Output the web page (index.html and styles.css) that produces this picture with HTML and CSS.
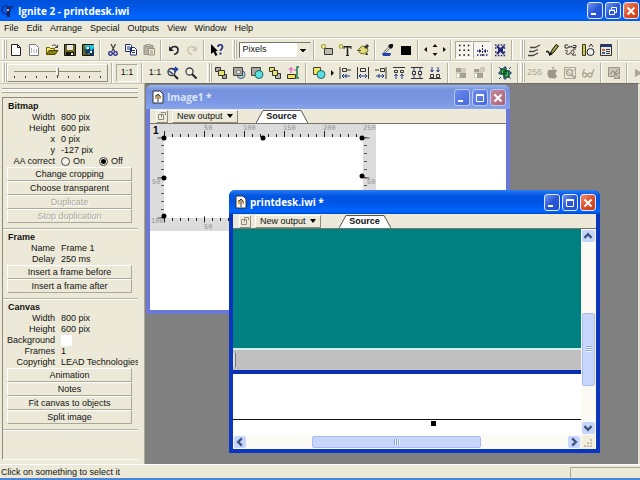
FILE: index.html
```html
<!DOCTYPE html>
<html lang="en">
<head>
<meta charset="utf-8">
<title>Ignite 2 - printdesk.iwi</title>
<link rel="stylesheet" href="styles.css">
</head>
<body>
<header class="titlebar titlebar-main">
  <svg class="app-icon" viewBox="0 0 14 14"><circle cx="5" cy="6" r="4" fill="none" stroke="#1238a8" stroke-width="2"/><path d="M6 3h3v10H6z" fill="#15225e"/><path d="M6 5h2v2H6z" fill="#d8b070"/><path d="M8 3l4-1-1 3" fill="none" stroke="#15225e"/></svg>
  <h1 class="title">Ignite 2 - printdesk.iwi</h1>
  <div class="win-buttons">
    <button class="win-btn" aria-label="Minimize"><svg viewBox="0 0 14 14"><path d="M3 9h5v2H3z" fill="#fff"/></svg></button>
    <button class="win-btn" aria-label="Restore"><svg viewBox="0 0 14 14" fill="none" stroke="#fff"><path d="M5.500 5V3.500h5v5H9M3.500 6h5v4.500h-5zM3 6.500h6"/></svg></button>
    <button class="win-btn close" aria-label="Close"><svg viewBox="0 0 14 14"><path d="M3.500 3.500l7 7M10.500 3.500l-7 7" stroke="#fff" stroke-width="2"/></svg></button>
  </div>
</header>
<nav class="menubar">
  <button>File</button><button>Edit</button><button>Arrange</button><button>Special</button><button>Outputs</button><button>View</button><button>Window</button><button>Help</button>
</nav>

<div class="toolrow toolrow-a">
  <div class="band">
    <i class="grip"></i>
    <button class="tool" aria-label="New"><svg viewBox="0 0 14 14"><path d="M2.500 1.500h6l3 3v8h-9z" fill="#fff" stroke="#222"/><path d="M8.500 1.500v3h3" fill="none" stroke="#222"/></svg></button>
    <button class="tool" aria-label="New from template"><svg viewBox="0 0 14 14"><path d="M2.500 1.500h6l3 3v8h-9z" fill="#fff" stroke="#777"/><path d="M4.500 5v5M7 6v4M9.500 6v4" stroke="#a8b6c0"/></svg></button>
    <button class="tool" aria-label="Open"><svg viewBox="0 0 14 14"><path d="M1.500 11.500v-7h3l1 1h4v2" fill="#f4e46a" stroke="#6b6200"/><path d="M1.500 11.500l2.500-4h9l-3 4z" fill="#8a8210" stroke="#4d4700"/><path d="M7 3c2-2 4-1 5 1M12.500 2v2.500H10" fill="none" stroke="#333"/></svg></button>
    <button class="tool" aria-label="Save"><svg viewBox="0 0 14 14"><path d="M1.500 1.500h11v11h-11z" fill="#6e6a14" stroke="#111"/><path d="M4 2h6v5H4z" fill="#e8e8e0"/><path d="M3 9h8v4H3z" fill="#111"/><path d="M8 10h2v2H8z" fill="#eee"/></svg></button>
    <button class="tool" aria-label="Save image"><svg viewBox="0 0 14 14"><path d="M1.500 1.500h11v11h-11z" fill="#6e6a14" stroke="#111"/><path d="M4 2h9v9H5z" fill="#20c8d8"/><path d="M3 5l3 2 2-4 2 5 3-3v7l-3 1-2-3-3 2z" fill="#153a60"/><path d="M6 4h2v2H6zM9 8h2v2H9z" fill="#fff"/></svg></button>
    <i class="sep"></i>
    <button class="tool" aria-label="Cut"><svg viewBox="0 0 14 14" fill="none"><path d="M5 1l3.500 7M9.500 1L6 8" stroke="#444" stroke-width="1.300"/><circle cx="4.500" cy="10.500" r="1.800" stroke="#1a1a90" stroke-width="1.300"/><circle cx="9.500" cy="10.500" r="1.800" stroke="#1a1a90" stroke-width="1.300"/></svg></button>
    <button class="tool" aria-label="Copy"><svg viewBox="0 0 14 14" fill="#fff" stroke="#1c2a70"><path d="M1.500 1.500h5l1 1v6h-6zM6.500 4.500h4l2 2v5.500h-6z"/><path d="M3 4h3M3 6h3M8 7.500h3M8 9.500h3"/></svg></button>
    <button class="tool" aria-label="Paste" disabled><svg viewBox="0 0 14 14" fill="#b4b1a4" stroke="#96937f"><path d="M2 2.500h9v9H2z"/><path d="M4.500 1.500h4v2h-4z" fill="#ddd"/><path d="M6.500 5.500h6v6.500h-6z" fill="#e6e3d6"/><path d="M8 8h3M8 10h3"/></svg></button>
    <i class="sep"></i>
    <button class="tool" aria-label="Undo"><svg viewBox="0 0 14 14" fill="none"><path d="M4 5.500C6 2.500 11 3 11 7c0 3-2 4-4 4.500" stroke="#24242c" stroke-width="1.600"/><path d="M2 3v5h5z" fill="#24242c"/></svg></button>
    <button class="tool" aria-label="Redo" disabled><svg viewBox="0 0 14 14" fill="none"><path d="M10 5.500C8 2.500 3 3 3 7c0 3 2 4 4 4.500" stroke="#c5c2b4" stroke-width="1.500"/><path d="M12 3v5H7z" fill="#c5c2b4"/></svg></button>
    <i class="sep"></i>
    <button class="tool" aria-label="Context help"><svg viewBox="0 0 14 14"><path d="M1 1v10l2.500-2 2 4 2-1-2-4H8z" fill="#000"/><path d="M8 4c0-3 4.500-3 4.500 0 0 2-2 2-2 4" fill="none" stroke="#1d2c7c" stroke-width="1.700"/><path d="M9.500 9.500h2v2h-2z" fill="#1d2c7c"/></svg></button>
  </div>
  <div class="band">
    <i class="grip"></i>
    <select class="units" aria-label="Units"><option>Pixels</option></select>
    <i class="sep"></i>
    <button class="tool" aria-label="Add shape"><svg viewBox="0 0 14 14"><path d="M4.500 5.500h8v6h-8z" fill="#bcbcb0" stroke="#333"/><circle cx="3.500" cy="3.500" r="2" fill="#fffcb0" stroke="#8b8610"/></svg></button>
    <button class="tool" aria-label="Add text"><svg viewBox="0 0 14 14"><circle cx="3" cy="3.500" r="1.800" fill="#fffcb0" stroke="#8b8610"/><path d="M5.500 3h8v3h-1V4.500h-2.200V12H11v1H8v-1h.7V4.500H6.500V6h-1z" fill="#222"/></svg></button>
    <button class="tool" aria-label="Add drawing"><svg viewBox="0 0 14 14"><path d="M2 7l4-4 5 1 1 4-4 3-4-1z" fill="#e4dc78" stroke="#77701b"/><path d="M8 4l3-3 2 2-3 3M9 12h3l-1-3" fill="#333"/><path d="M1 7.500h4" stroke="#555"/></svg></button>
    <i class="sep"></i>
    <button class="tool" aria-label="Pick colour"><svg viewBox="0 0 14 14"><path d="M3 10l6-6" stroke="#888" stroke-width="2.500"/><path d="M9 1l3 0v3l-2 2-3-3z" fill="#111"/><path d="M1 10h9l-1 3H2z" fill="#1c48b0"/><path d="M4 9l4-4" stroke="#eee"/></svg></button>
    <button class="tool" aria-label="Colour"><svg viewBox="0 0 14 14"><path d="M2 3h10v9H2z" fill="#000"/></svg></button>
    <i class="sep"></i>
    <button class="tool tool-wide" aria-label="Nudge"><svg viewBox="0 0 24 14"><path d="M4 4v5L1 6.500zM20 4v5l3-2.500zM9.500 4h5L12 1zM9.500 10h5L12 13z" fill="#111"/></svg></button>
    <i class="sep"></i>
    <button class="tool pressed" aria-label="Show handles"><svg viewBox="0 0 14 14"><path d="M2 2.500h11M2 12h11M2 7.200h11" stroke="#111" stroke-width="1.500" stroke-dasharray="1.500 2.900"/></svg></button>
    <button class="tool pressed" aria-label="Show rulers"><svg viewBox="0 0 14 14"><path d="M7.500 2v11" stroke="#333" stroke-dasharray="2 1"/><path d="M2 8h4M9 8h4M2 12h11" stroke="#20287a" stroke-width="1.500" stroke-dasharray="1.500 1.500"/><path d="M4 6l2.500 2L4 10M11 6L8.500 8l2.500 2" fill="#20287a"/></svg></button>
    <button class="tool" aria-label="Snap to grid"><svg viewBox="0 0 14 14"><path d="M2 2h11M2 5h11M2 9h11M2 12.500h11" stroke="#20287a" stroke-width="1.500" stroke-dasharray="1.500 1.400"/><path d="M4 3l7 8M11 3l-7 8M5 7h5" stroke="#20287a" stroke-width="2"/></svg></button>
    <i class="sep"></i>
  </div>
  <div class="band">
    <i class="grip"></i>
    <button class="tool" aria-label="Lines"><svg viewBox="0 0 14 14" fill="none" stroke="#444"><path d="M3 4.500h5l5-2.500M2 8.500h4l5-2M1 12.500h5l5-2.500" stroke-width="1.300"/></svg></button>
    <button class="tool" aria-label="Brush"><svg viewBox="0 0 14 14"><path d="M1 8.500h2L5 12" fill="none" stroke="#111" stroke-width="1.500"/><path d="M4.500 12L7 7l4-5.500 2.500 1.500L9 9z" fill="#a8a436" stroke="#111"/><path d="M4 13l1-4 3 2z" fill="#111"/></svg></button>
    <button class="tool" aria-label="Effects"><svg viewBox="0 0 14 14" fill="none" stroke="#333"><path d="M5 2H2v3h3V4M6 5V3l1.500 1L9 3v2M10 2.500h3v2h-3M2 8c3-2 3 1 1 2 0 2 4 2 5-1s3-2 3 0-2 3-3 1M10 6h3M9 12h4"/></svg></button>
    <button class="tool" aria-label="Timing"><svg viewBox="0 0 14 14"><path d="M1.500 1.500h3v11h-3z" fill="#d6cf38" stroke="#333"/><circle cx="9.500" cy="9" r="3.500" fill="#eee" stroke="#222"/><path d="M8 4l2-3 2 3" fill="none" stroke="#333"/></svg></button>
    <button class="tool" aria-label="Properties"><svg viewBox="0 0 14 14"><path d="M1.500 1.500h11v11h-11z" fill="#ece9d8" stroke="#333"/><path d="M2 2h10v2H2z" fill="#1c3c98"/><path d="M3 6h3v2H3z" fill="#d65a2b"/><path d="M3 9h3v2H3z" fill="#2f60b0"/><path d="M7 6.500h4M7 8.500h4M7 10.500h4" stroke="#335"/></svg></button>
    <i class="sep"></i>
  </div>
</div>

<div class="toolrow toolrow-b">
  <div class="band">
    <i class="grip"></i>
    <div class="zoom-slider">
      <input type="range" min="0" max="16" value="8" aria-label="Zoom">
      <div class="ticks"><i></i><i></i><i></i><i></i><i></i><i></i><i></i><i></i><i></i></div>
    </div>
    <i class="sep"></i>
    <button class="tool tool-ratio pressed">1:1</button>
    <i class="sep"></i>
    <button class="tool">1:1</button>
    <button class="tool" aria-label="Zoom to fit"><svg viewBox="0 0 14 14" fill="none"><circle cx="5.500" cy="6" r="3.500" stroke="#333" stroke-width="1.300"/><path d="M8 9l4 4" stroke="#222" stroke-width="2"/><path d="M6 3l5 0-2 3M3 5l4 3M9 1l3 3" stroke="#1c3ca8" stroke-width="1.500"/></svg></button>
    <button class="tool" aria-label="Zoom"><svg viewBox="0 0 14 14" fill="none"><circle cx="5.500" cy="5.500" r="3.500" fill="#f4f2e6" stroke="#444" stroke-width="1.300"/><path d="M8 8l4.500 4.500" stroke="#222" stroke-width="2"/></svg></button>
  </div>
  <div class="band">
    <i class="grip"></i>
    <button class="tool" aria-label="Group"><svg viewBox="0 0 14 14" stroke="#333"><path d="M1.500 1.500h5v4h-5z" fill="#aaa"/><path d="M8.500 8.500h4v4h-4z" fill="#aaa"/><path d="M4.500 4.500h6v5h-6z" fill="#e8e468"/></svg></button>
    <button class="tool" aria-label="Send to back"><svg viewBox="0 0 14 14"><circle cx="9" cy="8.500" r="4" fill="#a9dcd8" stroke="#458"/><path d="M1.500 1.500h9v8h-9z" fill="#aaa89c" stroke="#444"/><path d="M4.500 4.500h4v3h-4z" fill="#e4e2d8" stroke="#888"/></svg></button>
    <button class="tool" aria-label="Bring to front"><svg viewBox="0 0 14 14"><path d="M1.500 1.500h9v8h-9z" fill="#aaa89c" stroke="#444"/><circle cx="9" cy="8.500" r="4" fill="#58dfe0" stroke="#266"/></svg></button>
    <button class="tool" aria-label="Bring forward"><svg viewBox="0 0 14 14" stroke="#333"><path d="M1.500 1.500h5v4h-5z" fill="#e8e468"/><path d="M7.500 7.500h5v5h-5z" fill="#bbb"/><path d="M4.500 4.500h5v5h-5z" fill="#e8e468"/></svg></button>
    <button class="tool" aria-label="Arrange order"><svg viewBox="0 0 14 14"><path d="M1.500 8.500h8v4h-8z" fill="#f2e458" stroke="#333"/><path d="M5 7V2M3 4l2-2.500L7 4M8 4h3" fill="none" stroke="#e045b0"/><path d="M13 1h-2v11h2" fill="none" stroke="#108050" stroke-width="1.500"/></svg></button>
    <i class="sep"></i>
    <button class="tool" aria-label="Align objects"><svg viewBox="0 0 14 14"><path d="M1.500 1.500h7v7h-7z" fill="#f2e458" stroke="#444"/><circle cx="9" cy="8.500" r="4" fill="#58dfe0" stroke="#266"/></svg></button>
    <button class="tool tool-thin" aria-label="Align menu"><svg viewBox="0 0 8 14"><path d="M3 4v6l3-3z" fill="#111"/></svg></button>
    <button class="tool" aria-label="Align left"><svg viewBox="0 0 14 14" fill="none" stroke="#333"><path d="M2 1v12M4.500 2.500h4v3h-4zM9 4h4"/><path d="M4 10h8M6 8l-2 2 2 2M8 8v4" stroke="#24388a"/></svg></button>
    <button class="tool" aria-label="Align centre"><svg viewBox="0 0 14 14" fill="none" stroke="#333"><path d="M1.500 1v12M12.500 1v12M4.500 2.500h5v3h-5z"/><path d="M3 10h8M5 8L3 10l2 2M9 8l2 2-2 2" stroke="#24388a"/></svg></button>
    <button class="tool" aria-label="Align right"><svg viewBox="0 0 14 14" fill="none" stroke="#333"><path d="M12 1v12M6.500 2.500h4v3h-4zM1 4h4"/><path d="M2 10h8M8 8l2 2-2 2M5 8v4" stroke="#24388a"/></svg></button>
    <button class="tool" aria-label="Align top"><svg viewBox="0 0 14 14" fill="none" stroke="#333"><path d="M1 1.500h12M2.500 4.500h3v2h-3zM8.500 4.500h3v2h-3z"/><path d="M4 13V8M2.500 10L4 8l1.500 2M10 13V8M8.500 10L10 8l1.500 2" stroke="#24388a"/></svg></button>
    <button class="tool" aria-label="Align middle"><svg viewBox="0 0 14 14" fill="none" stroke="#333"><path d="M1 1.500h12M1 12.500h12M2.500 5.500h3v3h-3zM8.500 5.500h3v3h-3z"/><path d="M4 2v3M10 2v3M4 9v3M10 9v3" stroke="#24388a"/></svg></button>
    <button class="tool" aria-label="Align bottom"><svg viewBox="0 0 14 14" fill="none" stroke="#333"><path d="M1 12.500h12M2.500 8.500h3v3h-3zM8.500 8.500h3v3h-3z"/><path d="M4 1v5M2.500 4L4 6l1.500-2M10 1v5M8.500 4L10 6l1.500-2" stroke="#24388a"/></svg></button>
    <i class="sep"></i>
    <button class="tool" aria-label="Group frames" disabled><svg viewBox="0 0 14 14"><path d="M2 2h10v10H2z" fill="#cfccbd"/><path d="M2 2h5v4H2zM6 7h6v5H6z" fill="#a5a294"/><path d="M3 8h2v3H3z" fill="#fff"/></svg></button>
    <button class="tool" aria-label="Ungroup frames" disabled><svg viewBox="0 0 14 14"><path d="M2 3h9v9H2z" fill="#cfccbd"/><path d="M2 3h5v3H2zM5 7h6v5H5z" fill="#a5a294"/><path d="M8 2h5M12 2v4" stroke="#aaa"/><path d="M3 8h2v3H3z" fill="#fff"/></svg></button>
    <i class="sep"></i>
    <button class="tool" aria-label="Fit canvas"><svg viewBox="0 0 14 14"><path d="M3 3h5v5H3zM6 5h5v6H6z" fill="#46c85c" stroke="#0b4a2a" stroke-width="1.500"/><path d="M5 2l2-2 2 2zM5 12l2 2 2-2zM2 5L0 7l2 2zM12 5l2 2-2 2z" fill="#2553a8"/><path d="M1 1l2 2M13 1l-2 2M1 13l2-2M13 13l-2-2" stroke="#2553a8"/></svg></button>
    <i class="sep"></i>
  </div>
  <div class="band">
    <i class="grip"></i>
    <button class="tool" disabled>256</button>
    <button class="tool" aria-label="Mac colours" disabled><svg viewBox="0 0 14 14" fill="#9a978a"><path d="M7 4c3-1 5 0 5 1-2 1-2 4 0 5-1 3-3 3-5 2-2 1-4 0-4.500-4S4 3 7 4zM7 3c0-2 1-2 2.500-2.500C9 2 8.500 3 7 3z"/></svg></button>
    <button class="tool" aria-label="Inspect" disabled><svg viewBox="0 0 14 14" fill="none" stroke="#aaa799"><path d="M1.500 1.500h11v11h-11zM2 3l10 9M12 3l-3 3"/><circle cx="6.500" cy="6.500" r="3" stroke-width="1.500"/><path d="M9 9l3 3" stroke-width="2"/></svg></button>
    <button class="tool" aria-label="Preview" disabled><svg viewBox="0 0 14 14" fill="none" stroke="#aaa799" stroke-width="1.300"><circle cx="3.500" cy="9" r="2"/><circle cx="9" cy="9" r="2"/><path d="M5.500 8.500h1.500M1.500 8l2-5M11 8l2-5"/></svg></button>
    <i class="sep"></i>
    <button class="tool" aria-label="Export" disabled><svg viewBox="0 0 14 14"><path d="M1.500 1.500h11v9h-11z" fill="#c9c6b8" stroke="#98958a"/><path d="M3 8l3-3 2 2 3-4" fill="none" stroke="#8c897c"/><path d="M7 7h6v6H7z" fill="#a19e91"/><path d="M8 10l1.500 1.500L12 8" fill="none" stroke="#eee"/></svg></button>
    <i class="sep"></i>
    <button class="tool" aria-label="Play" disabled><svg viewBox="0 0 14 14"><path d="M2 3v8l7-4z" fill="#a9a698"/></svg></button>
  </div>
</div>

<main class="main">
  <aside class="side">
    <i class="side-grip"></i>
    <div class="panel">
      <section class="group">
        <h2>Bitmap</h2>
        <dl>
          <dt>Width</dt><dd>800 pix</dd>
          <dt>Height</dt><dd>600 pix</dd>
          <dt>x</dt><dd>0 pix</dd>
          <dt>y</dt><dd>-127 pix</dd>
          <dt>AA correct</dt>
          <dd class="radios"><label><input type="radio" name="aa">On</label><label><input type="radio" name="aa" checked>Off</label></dd>
        </dl>
        <button class="cmd">Change cropping</button>
        <button class="cmd">Choose transparent</button>
        <button class="cmd" disabled>Duplicate</button>
        <button class="cmd" disabled>Stop duplication</button>
      </section>
      <section class="group">
        <h2>Frame</h2>
        <dl>
          <dt>Name</dt><dd>Frame 1</dd>
          <dt>Delay</dt><dd>250 ms</dd>
        </dl>
        <button class="cmd">Insert a frame before</button>
        <button class="cmd">Insert a frame after</button>
      </section>
      <section class="group">
        <h2>Canvas</h2>
        <dl>
          <dt>Width</dt><dd>800 pix</dd>
          <dt>Height</dt><dd>600 pix</dd>
          <dt>Background</dt><dd><button class="swatch" aria-label="Background colour"></button></dd>
          <dt>Frames</dt><dd>1</dd>
          <dt>Copyright</dt><dd>LEAD Technologies</dd>
        </dl>
        <button class="cmd">Animation</button>
        <button class="cmd">Notes</button>
        <button class="cmd">Fit canvas to objects</button>
        <button class="cmd">Split image</button>
      </section>
    </div>
  </aside>

  <div class="workspace">
    <section class="window window-image">
      <header class="titlebar">
        <svg class="doc-icon" viewBox="0 0 12 14"><path d="M1 1h7l3 3v9H1z" fill="#fff" stroke="#333"/><path d="M3 5h2v4H3zM7 6h2v3H7z" fill="#dca64a"/><path d="M6 4v8M3.500 6.500L6 4l2.500 2.500" fill="none" stroke="#333"/></svg>
        <h2 class="title">Image1 *</h2>
        <div class="win-buttons">
          <button class="win-btn" aria-label="Minimize"><svg viewBox="0 0 14 14"><path d="M3 9h5v2H3z" fill="#fff"/></svg></button>
          <button class="win-btn" aria-label="Maximize"><svg viewBox="0 0 14 14" fill="none" stroke="#fff"><path d="M3.500 3.500h7v7h-7zM3 4.500h8"/></svg></button>
          <button class="win-btn close" aria-label="Close"><svg viewBox="0 0 14 14"><path d="M3.500 3.500l7 7M10.500 3.500l-7 7" stroke="#fff" stroke-width="2"/></svg></button>
        </div>
      </header>
      <div class="docbar">
        <button class="doc-btn icon-only" aria-label="Output"><svg viewBox="0 0 10 10" fill="none" stroke="#8f8c7e"><path d="M1.500 3.500h5v5h-5zM4.500 6V2.500M4 1.500h4.500V4"/></svg></button>
        <button class="doc-btn">New output <svg class="caret" viewBox="0 0 6 4"><path d="M0 0h6L3 4z"/></svg></button>
        <button class="tab"><svg class="tab-shape" viewBox="0 0 52 13" preserveAspectRatio="none"><path d="M0 13L7 .5h38L52 13" fill="#fff" stroke="#555"/></svg><span>Source</span></button>
      </div>
      <div class="doc-view">
        <svg class="ruled" viewBox="0 0 226 107" role="img" aria-label="Ruled image area">
          <path d="M0 0h226v107H0z" fill="#dcdcdc"/>
          <path d="M14 13h199v81H14z" fill="#fff"/>
          <g stroke="#222" fill="none">
            <path d="M14 11.500h200M14 95.500h200" stroke-width="3" stroke-dasharray="1 7"/>
            <path d="M14 10h200M14 95.500h200" stroke-width="6" stroke-dasharray="1 39"/>
            <path d="M12.500 13v81M215.500 13v81" stroke="#555" stroke-width="3" stroke-dasharray="1 7"/>
            <path d="M10.500 13.500v82M216.500 13.500v82" stroke="#555" stroke-width="6" stroke-dasharray="1 39"/>
          </g>
          <g class="ruler-text">
            <text x="54" y="6">50</text><text x="93" y="6">100</text><text x="133" y="6">150</text><text x="173" y="6">200</text><text x="213" y="6">250</text>
            <text x="2" y="60">50</text><text x="1" y="99">100</text><text x="54" y="105">50</text><text x="217" y="60">50</text>
          </g>
          <text class="frame-no" x="3" y="10">1</text>
          <g><circle cx="14" cy="14" r="2.500"/><circle cx="14" cy="54" r="2.500"/><circle cx="14" cy="92" r="2.500"/><circle cx="113" cy="14" r="2.500"/><circle cx="212" cy="14" r="2.500"/><circle cx="212" cy="52" r="2.500"/></g>
        </svg>
      </div>
    </section>

    <section class="window window-print active">
      <header class="titlebar">
        <svg class="doc-icon" viewBox="0 0 12 14"><path d="M1 1h7l3 3v9H1z" fill="#fff" stroke="#333"/><path d="M3 5h2v4H3zM7 6h2v3H7z" fill="#dca64a"/><path d="M6 4v8M3.500 6.500L6 4l2.500 2.500" fill="none" stroke="#333"/></svg>
        <h2 class="title">printdesk.iwi *</h2>
        <div class="win-buttons">
          <button class="win-btn" aria-label="Minimize"><svg viewBox="0 0 14 14"><path d="M3 9h5v2H3z" fill="#fff"/></svg></button>
          <button class="win-btn" aria-label="Maximize"><svg viewBox="0 0 14 14" fill="none" stroke="#fff"><path d="M3.500 3.500h7v7h-7zM3 4.500h8"/></svg></button>
          <button class="win-btn close" aria-label="Close"><svg viewBox="0 0 14 14"><path d="M3.500 3.500l7 7M10.500 3.500l-7 7" stroke="#fff" stroke-width="2"/></svg></button>
        </div>
      </header>
      <div class="docbar">
        <button class="doc-btn icon-only" aria-label="Output"><svg viewBox="0 0 10 10" fill="none" stroke="#8f8c7e"><path d="M1.500 3.500h5v5h-5zM4.500 6V2.500M4 1.500h4.500V4"/></svg></button>
        <button class="doc-btn">New output <svg class="caret" viewBox="0 0 6 4"><path d="M0 0h6L3 4z"/></svg></button>
        <button class="tab"><svg class="tab-shape" viewBox="0 0 52 13" preserveAspectRatio="none"><path d="M0 13L7 .5h38L52 13" fill="#fff" stroke="#555"/></svg><span>Source</span></button>
      </div>
      <div class="doc-view doc-scroll">
        <div class="picture">
          <div class="desk"></div>
          <div class="taskbar"><i></i></div>
          <div class="paper"></div>
          <div class="below"><i class="handle"></i></div>
        </div>
        <div class="scroll scroll-v">
          <button aria-label="Scroll up"><svg viewBox="0 0 10 10"><path d="M2 6.500l3-3 3 3"/></svg></button>
          <span class="track track-before"></span>
          <span class="thumb"><i></i></span>
          <span class="track track-after"></span>
          <button aria-label="Scroll down"><svg viewBox="0 0 10 10"><path d="M2 3.500l3 3 3-3"/></svg></button>
        </div>
        <div class="scroll scroll-h">
          <button aria-label="Scroll left"><svg viewBox="0 0 10 10"><path d="M6.500 2l-3 3 3 3"/></svg></button>
          <span class="track track-before"></span>
          <span class="thumb"><i></i></span>
          <span class="track track-after"></span>
          <button aria-label="Scroll right"><svg viewBox="0 0 10 10"><path d="M3.500 2l3 3-3 3"/></svg></button>
        </div>
        <svg class="resize" viewBox="0 0 14 14"><path d="M9 4h2v2H9zM6 7h2v2H6zM9 7h2v2H9zM3 10h2v2H3zM6 10h2v2H6zM9 10h2v2H9z" fill="#cbbfa8"/></svg>
      </div>
    </section>
  </div>
</main>

<footer class="status"><span>Click on something to select it</span><i class="status-cell"></i></footer>
</body>
</html>
```
FILE: styles.css
```css
* { box-sizing: border-box; }

body {
  margin: 0;
  height: 100vh;
  display: flex;
  flex-direction: column;
  overflow: hidden;
  background: #ece9d8;
  color: #111;
  font: 9px/11px "Liberation Sans", Arial, sans-serif;
}

button {
  font: inherit;
  color: inherit;
  padding: 0;
  margin: 0;
  border: 0;
  background: none;
}

h1, h2, dl, dd { margin: 0; }
svg { display: block; }

/* Title bars */
.titlebar {
  display: flex;
  align-items: center;
  flex: none;
  height: 24px;
  padding: 0 4px 0 6px;
  gap: 3px;
  color: #fff;
  background: linear-gradient(#9db4ee, #7691dc 20%, #7b98e4 70%, #86a4ee);
}
.active .titlebar { background: linear-gradient(#2a7cf5, #0054e0 25%, #0055e5 55%, #0066ff 90%, #0048c8); }
.titlebar-main {
  height: 21px;
  padding: 0 1px 0 1px;
  background: linear-gradient(#0050d8, #0056e4 30%, #0066ff 85%, #0058e8);
}
.title {
  flex: 1;
  font: bold 10px/14px "Open Sans", "Noto Sans", sans-serif;
}
.app-icon { width: 14px; height: 14px; }
.doc-icon { width: 12px; height: 14px; }
.win-buttons { display: flex; gap: 2px; }
.win-btn {
  width: 16px;
  height: 17px;
  padding: 1px 0 0;
  border: 1px solid #dfe8fc;
  border-radius: 3px;
  background: linear-gradient(135deg, #6f97f0, #2a57d8 50%, #2450cc);
}
.win-btn.close { background: linear-gradient(135deg, #f09070, #dd4f2a 50%, #c8401c); }
.win-btn svg { width: 14px; height: 14px; }
.window-image .win-btn { border-color: #b9c8f4; background: linear-gradient(135deg, #6d8cec, #4668dc); }
.window-image .win-btn.close { background: linear-gradient(135deg, #c48a9c, #ac6074); }
.window-image .title { color: #dbe5fb; }

.menubar {
  display: flex;
  flex: none;
  gap: 8px;
  height: 16px;
  padding: 0 4px 2px;
}

/* Toolbars */
.toolrow {
  display: grid;
  flex: none;
  height: 23px;
  border-top: 1px solid #c9c6b6;
  overflow: hidden;
}
.toolrow-a { grid-template-columns: 36% 45% 19%; }
.toolrow-b { grid-template-columns: 32% 49% 19%; }
.band {
  display: flex;
  align-items: center;
  min-width: 0;
  border-top: 1px solid #fff;
}
.grip {
  flex: none;
  width: 4px;
  height: 19px;
  margin: 0 1px 0 2px;
  border: solid #fff;
  border-width: 0 1px;
  box-shadow: 1px 0 #b5b2a2, inset -1px 0 #b5b2a2;
}
.sep {
  flex: none;
  width: 2px;
  height: 20px;
  margin: 0 3px 0 2px;
  border-left: 1px solid #b5b2a2;
  border-right: 1px solid #fff;
}
.toolrow-b .sep { margin: 0 3px; }
.tool {
  flex: none;
  display: grid;
  place-items: center;
  width: 18px;
  height: 18px;
}
.tool svg { width: 14px; height: 14px; }
.tool:disabled { color: #aaa799; }
.tool-wide { width: 26px; }
.tool-wide svg { width: 24px; }
.tool-thin { width: 8px; }
.tool-thin svg { width: 8px; }
.tool-ratio { width: 22px; }
.pressed {
  background: #f6f4ec;
  border: 1px solid;
  border-color: #aca899 #fff #fff #aca899;
}
.tool-ratio.pressed { background: #ece9d8; }
.units {
  appearance: none;
  width: 72px;
  height: 16px;
  margin-left: 2px;
  padding: 0 2px;
  border: 1px solid;
  border-color: #77756a #ddd #ddd #77756a;
  border-radius: 0;
  font: inherit;
  color: inherit;
  background:
    linear-gradient(#111, #111) right 4px top 6px / 6px 1px no-repeat,
    linear-gradient(#111, #111) right 5px top 7px / 4px 1px no-repeat,
    linear-gradient(#111, #111) right 6px top 8px / 2px 1px no-repeat,
    linear-gradient(#ece9d8, #ece9d8) right / 13px 100% no-repeat,
    #fff;
}

.zoom-slider {
  flex: none;
  width: 101px;
  height: 18px;
  padding: 2px 6px;
  border: 1px solid;
  border-color: #fff #8f8c7e #8f8c7e #fff;
}
.zoom-slider input {
  appearance: none;
  display: block;
  width: 100%;
  height: 9px;
  margin: 0;
  background: linear-gradient(#8f8c7e, #8f8c7e) center / 100% 1px no-repeat;
}
.zoom-slider input::-webkit-slider-thumb {
  appearance: none;
  width: 3px;
  height: 9px;
  background: #ece9d8;
  border: 1px solid;
  border-color: #fff #77756a #77756a #fff;
}
.ticks { display: flex; justify-content: space-between; }
.ticks i { width: 1px; height: 2px; background: #333; }

/* Main area */
.main { display: flex; flex: 1; min-height: 0; }
.side {
  display: flex;
  flex-direction: column;
  flex: none;
  width: 145px;
  padding: 4px 6px 4px 2px;
  border-top: 1px solid #c9c6b6;
  border-right: 1px solid #aca899;
  gap: 4px;
}
.side-grip {
  height: 5px;
  flex: none;
  border: solid #aca899;
  border-width: 1px 0;
  box-shadow: inset 0 1px #fff, inset 0 -1px #fff;
}
.panel {
  flex: 1;
  min-height: 0;
  overflow: hidden;
  border-top: 1px solid #8f8c7e;
  border-left: 1px solid #8f8c7e;
  border-bottom: 1px solid #fff;
}
.group {
  display: flex;
  flex-direction: column;
  padding: 2px 6px 5px 4px;
  border-bottom: 1px solid #b5b2a2;
  box-shadow: 0 1px #fff;
}
.group h2 { font: bold 9px/12px "Liberation Sans", Arial, sans-serif; padding-left: 1px; }
.group dl {
  display: grid;
  grid-template-columns: 48px 1fr;
  grid-auto-rows: 11px;
  column-gap: 6px;
}
.group dt { text-align: right; }
.group dd { white-space: nowrap; }
.radios { display: flex; gap: 14px; }
.radios label { display: flex; align-items: center; gap: 3px; }
.radios input {
  appearance: none;
  width: 9px;
  height: 9px;
  margin: 0;
  border: 1px solid #444;
  border-radius: 50%;
  background: #f6f4ea;
}
.radios input:checked { background: radial-gradient(#000 2px, #f6f4ea 3px); }
.swatch { display: block; width: 11px; height: 11px; background: #fff; }
.cmd {
  height: 14px;
  border: 1px solid;
  border-color: #fff #aca899 #aca899 #fff;
}
.cmd:disabled { color: #aaa799; text-shadow: 1px 1px #fff; }

.workspace {
  position: relative;
  flex: 1;
  background: #808080;
  border-top: 1px solid #6b6b66;
  border-right: 2px solid #e6e3d4;
  overflow: hidden;
}

/* Document windows */
.window {
  position: absolute;
  display: flex;
  flex-direction: column;
  border: solid #6c77d8;
  border-width: 0 4px 4px;
  border-radius: 6px 6px 0 0;
  background: #fff;
}
.window .titlebar { margin: 0 -4px; border-radius: 6px 6px 0 0; }
.window-image { left: 1px; top: 1px; width: 364px; height: 229px; }
.window-print { left: 84px; top: 106px; width: 371px; height: 263px; }
.active { border-color: #0a35c0; }
.docbar {
  display: flex;
  align-items: center;
  flex: none;
  height: 15px;
  padding-left: 6px;
  gap: 4px;
  background: #ece9d8;
  border-bottom: 1px solid #77756a;
}
.doc-btn {
  display: flex;
  align-items: center;
  gap: 4px;
  height: 13px;
  padding: 0 4px;
  border: 1px solid;
  border-color: #fff #8f8c7e #8f8c7e #fff;
}
.doc-btn.icon-only { padding: 0; }
.icon-only svg { width: 10px; height: 10px; }
.caret { width: 6px; height: 4px; }
.tab {
  display: grid;
  width: 52px;
  height: 13px;
  margin: 1px 0 0 14px;
  font-weight: bold;
}
.tab > * { grid-area: 1 / 1; }
.tab span { line-height: 13px; }
.tab-shape { width: 52px; height: 13px; }
.doc-view { flex: 1; min-height: 0; }
.ruled { width: 226px; height: 107px; }
.ruler-text { font: 7px "Liberation Mono", monospace; fill: #909090; }
.frame-no { font: bold 10px "Liberation Sans", Arial, sans-serif; }

.doc-scroll {
  display: grid;
  grid-template: 1fr 14px / 1fr 15px;
}
.picture { display: flex; flex-direction: column; }
.desk { flex: 1; background: #008080; }
.taskbar {
  height: 22px;
  padding-top: 3px;
  border-top: 2px solid #d2f0ee;
  background: #c0c0c0;
}
.taskbar i { display: block; width: 3px; height: 14px; border-right: 1px solid #77756a; background: #ddd; }
.paper {
  height: 50px;
  border-top: 4px solid #0a2fb0;
  border-bottom: 1px solid #111;
  background: #fff;
}
.below { display: flex; justify-content: center; height: 15px; padding: 1px 0 0 52px; }
.handle { width: 5px; height: 5px; background: #000; }

.scroll { display: flex; background: #fbfaf5; padding: 1px; }
.scroll-v { flex-direction: column; }
.scroll button {
  flex: none;
  width: 12px;
  height: 12px;
  border-radius: 2px;
  background: #c6d5fb;
}
.scroll-v button { width: 13px; }
.scroll svg { width: 12px; height: 12px; fill: none; stroke: #3f557f; stroke-width: 2; }
.thumb {
  display: grid;
  place-items: center;
  border: 1px solid #a9bcf0;
  border-radius: 2px;
  background: #c8d6fb;
}
.scroll-v .thumb { flex: 72; }
.scroll-v .track-before { flex: 71; }
.scroll-v .track-after { flex: 36; }
.scroll-h .thumb { flex: 167; }
.scroll-h .track-before { flex: 66; }
.scroll-h .track-after { flex: 87; }
.scroll-v .thumb i { width: 6px; height: 6px; background: repeating-linear-gradient(#8fa6e4 0 1px, #eef3ff 1px 2px); }
.scroll-h .thumb i { width: 6px; height: 6px; background: repeating-linear-gradient(90deg, #8fa6e4 0 1px, #eef3ff 1px 2px); }
.resize { width: 14px; height: 14px; background: #f1eee2; }

.status {
  display: flex;
  align-items: end;
  flex: none;
  justify-content: space-between;
  height: 16px;
  padding-left: 1px;
  border-top: 1px solid #fff;
  border-bottom: 2px solid #4a86d8;
}
.status-cell {
  width: 11%;
  height: 11px;
  border: solid #aca899;
  border-width: 1px 0 0 1px;
}
```
